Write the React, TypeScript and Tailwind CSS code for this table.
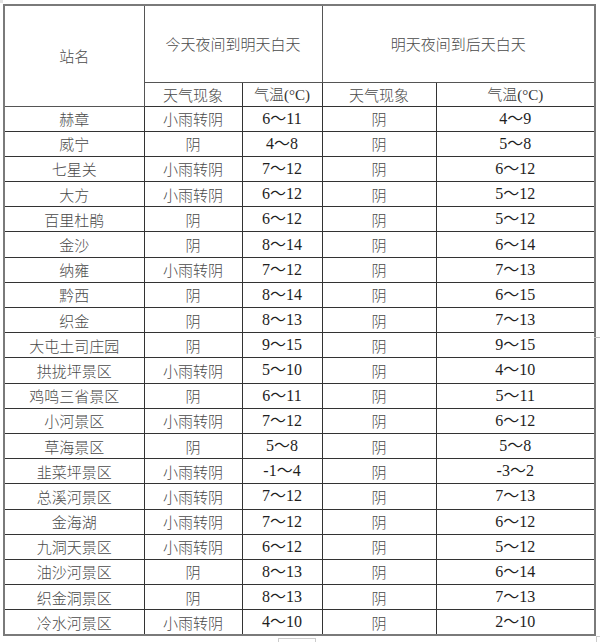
const rows: [string, string, string, string, string][] = [
  ["赫章", "小雨转阴", "6～11", "阴", "4～9"],
  ["威宁", "阴", "4～8", "阴", "5～8"],
  ["七星关", "小雨转阴", "7～12", "阴", "6～12"],
  ["大方", "小雨转阴", "6～12", "阴", "5～12"],
  ["百里杜鹃", "阴", "6～12", "阴", "5～12"],
  ["金沙", "阴", "8～14", "阴", "6～14"],
  ["纳雍", "小雨转阴", "7～12", "阴", "7～13"],
  ["黔西", "阴", "8～14", "阴", "6～15"],
  ["织金", "阴", "8～13", "阴", "7～13"],
  ["大屯土司庄园", "阴", "9～15", "阴", "9～15"],
  ["拱拢坪景区", "小雨转阴", "5～10", "阴", "4～10"],
  ["鸡鸣三省景区", "阴", "6～11", "阴", "5～11"],
  ["小河景区", "小雨转阴", "7～12", "阴", "6～12"],
  ["草海景区", "阴", "5～8", "阴", "5～8"],
  ["韭菜坪景区", "小雨转阴", "-1～4", "阴", "-3～2"],
  ["总溪河景区", "小雨转阴", "7～12", "阴", "7～13"],
  ["金海湖", "小雨转阴", "7～12", "阴", "6～12"],
  ["九洞天景区", "小雨转阴", "6～12", "阴", "5～12"],
  ["油沙河景区", "阴", "8～13", "阴", "6～14"],
  ["织金洞景区", "阴", "8～13", "阴", "7～13"],
  ["冷水河景区", "小雨转阴", "4～10", "阴", "2～10"],
];

// Chinese text is thin grey in the source; numbers are darker serif
const cjk = "font-['Noto_Sans_CJK_SC',sans-serif] font-light text-[#4a4a4a]";
const num = "font-['Liberation_Serif','Noto_Sans_CJK_SC',serif] font-normal text-[#1e1e1e]";
const cell = "border border-[#333] p-0 text-center align-middle text-[15px] leading-none";

function Temp() {
  return (
    <span>
      <span className={cjk}>气温</span>
      <span className="font-['Liberation_Serif',serif] font-normal text-[#333]">(°C)</span>
    </span>
  );
}

export default function App() {
  return (
    <div className="relative h-[642px] w-[600px] overflow-hidden bg-white">
      <div className="absolute left-0 top-0 h-[3px] w-[3px] bg-[#e4e4e4]" />
      <table className="ml-[3px] mt-[4px] w-[591px] table-fixed border-collapse border-2 border-[#7a7a7a]">
        <colgroup>
          <col className="w-[140px]" />
          <col className="w-[98px]" />
          <col className="w-[80px]" />
          <col className="w-[114px]" />
          <col className="w-[159px]" />
        </colgroup>
        <thead>
          <tr className="h-[77px]">
            <th rowSpan={2} className={`${cell} ${cjk} border-[#555]`}>
              站名
            </th>
            <th colSpan={2} className={`${cell} ${cjk} border-[#555]`}>
              今天夜间到明天白天
            </th>
            <th colSpan={2} className={`${cell} ${cjk} border-[#555]`}>
              明天夜间到后天白天
            </th>
          </tr>
          <tr className="h-[24px]">
            <th className={`${cell} ${cjk}`}>天气现象</th>
            <th className={`${cell} font-normal`}>
              <Temp />
            </th>
            <th className={`${cell} ${cjk}`}>天气现象</th>
            <th className={`${cell} font-normal`}>
              <Temp />
            </th>
          </tr>
        </thead>
        <tbody>
          {rows.map((r) => (
            <tr key={r[0]} className="h-[25.2px]">
              <td className={`${cell} ${cjk}`}>{r[0]}</td>
              <td className={`${cell} ${cjk}`}>{r[1]}</td>
              <td className={`${cell} ${num} text-[16px]`}>{r[2]}</td>
              <td className={`${cell} ${cjk}`}>{r[3]}</td>
              <td className={`${cell} ${num} text-[16px]`}>{r[4]}</td>
            </tr>
          ))}
        </tbody>
      </table>
      <div className="absolute left-[594px] top-[337px] h-px w-[6px] bg-[#bbb]" />
      <div className="absolute left-[278px] top-[638px] h-[4px] w-[38px] border-l border-r border-t border-[#ccc]" />
      <div className="absolute left-[596px] top-[636px] h-[6px] w-[4px] border-l border-t border-[#ccc]" />
    </div>
  );
}
